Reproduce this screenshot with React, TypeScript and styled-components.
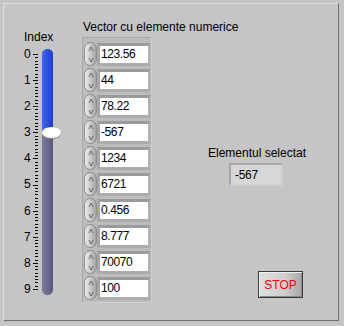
import React from "react";
import styled, { createGlobalStyle } from "styled-components";

const Global = createGlobalStyle`
  html, body { margin: 0; padding: 0; background: #c5c4c6; }
  body { font-family: "Liberation Sans", Arial, sans-serif; font-size: 12px; color: #000; }
`;

const Page = styled.div`
  width: 344px;
  height: 326px;
  padding: 3px;
  box-sizing: border-box;
  background: #c5c4c6;
`;

const Panel = styled.div`
  width: 336px;
  height: 318px;
  box-sizing: border-box;
  border-top: 1px solid #dedede;
  border-left: 1px solid #dedede;
  border-right: 1px solid #6e6e6e;
  border-bottom: 1px solid #6e6e6e;
  background: #c5c4c6;
  display: flex;
  align-items: flex-start;
  padding: 16px 0 0 20px;
`;

const Label = styled.div`
  font-size: 12px;
  line-height: 14px;
  white-space: nowrap;
`;

const SliderCol = styled.div`
  width: 58px;
  margin-top: 10px;
  display: flex;
  flex-direction: column;
`;

const SliderBody = styled.div`
  display: flex;
  align-items: flex-start;
  margin-top: -3px;
`;

const ScaleLabels = styled.div`
  display: flex;
  flex-direction: column;
  width: 8px;
`;

const ScaleNum = styled.div`
  height: 26.1px;
  line-height: 26px;
  font-size: 12px;
`;

const Ticks = styled.svg`
  flex: none;
`;

const Track = styled.div`
  position: relative;
  margin-top: 8px;
  margin-left: 3px;
  width: 11px;
  height: 246px;
  border-radius: 6px;
  background: linear-gradient(to right, #7c7c9e, #67678c 60%, #57577c);
`;

const Fill = styled.div`
  position: absolute;
  left: 0;
  top: 0;
  width: 11px;
  border-radius: 6px 6px 0 0;
  background: linear-gradient(to right, #4468f6, #2a4cec 55%, #1f3bcc);
`;

const Thumb = styled.div`
  position: absolute;
  left: 0;
  width: 19px;
  height: 11px;
  border-radius: 50%;
  background: radial-gradient(ellipse at 45% 40%, #ffffff 55%, #ececec 80%, #c4c4c4);
  box-shadow: 0 1px 0 #8a8a8a;
`;

const ArrayCol = styled.div`
  width: 70px;
  display: flex;
  flex-direction: column;
`;

const ArrayLabel = styled(Label)`
  margin-left: 1px;
`;

const ArrayBox = styled.div`
  margin-top: 3px;
  width: 70px;
  box-sizing: border-box;
  border: 1px solid #a9a8a9;
  border-right-color: #d0cfd0;
  border-bottom-color: #d0cfd0;
  padding: 3px 0 1px 0;
  background: #bcbbbd;
  display: flex;
  flex-direction: column;
`;

const ElementRow = styled.div`
  height: 26px;
  display: flex;
  align-items: center;
  padding-left: 1px;
`;

const IncDec = styled.div`
  width: 13px;
  height: 24px;
  box-sizing: border-box;
  border-radius: 7px;
  border: 1px solid #8e8e8e;
  background: linear-gradient(to right, #ececec, #cdcdcd 45%, #a2a2a2);
  display: flex;
  flex-direction: column;
  align-items: center;
  justify-content: space-around;
`;

const FieldFrame = styled.div`
  width: 54px;
  height: 23px;
  box-sizing: border-box;
  border: 3px solid #a7a6a8;
  border-top-color: #9b9a9c;
  border-right-color: #b2b1b3;
  border-bottom-color: #acabad;
  background: #fff;
  display: flex;
  align-items: center;
`;

const Field = styled.div`
  flex: 1;
  padding-left: 1px;
  font-size: 12px;
  letter-spacing: -0.4px;
  line-height: 17px;
  white-space: nowrap;
  overflow: hidden;
`;

const RightCol = styled.div`
  margin-left: 56px;
  margin-top: 126px;
  display: flex;
  flex-direction: column;
  align-items: flex-start;
`;

const Indicator = styled.div`
  margin-top: 3px;
  margin-left: 21px;
  width: 54px;
  height: 23px;
  box-sizing: border-box;
  border: 2px solid #a8a7a8;
  border-bottom-color: #cfcecf;
  border-right-color: #cfcecf;
  background: #d8d7d8;
  display: flex;
  align-items: center;
  padding-left: 4px;
  font-size: 12px;
  letter-spacing: -0.3px;
`;

const StopButton = styled.button`
  margin-top: 85px;
  margin-left: 50px;
  width: 45px;
  height: 27px;
  box-sizing: border-box;
  border: 1px solid #3a3a3a;
  padding: 0;
  background: linear-gradient(to right, #dedede, #cfcfcf 60%, #a6a6a6);
  box-shadow: inset 1px 1px 0 #f0f0f0, inset -1px -1px 0 #8a8a8a;
  color: #ff0000;
  font-family: "Liberation Sans", Arial, sans-serif;
  font-size: 12px;
  cursor: pointer;
`;

const values = ["123.56", "44", "78.22", "-567", "1234", "6721", "0.456", "8.777", "70070", "100"];

const Arrow = ({ up }: { up: boolean }) => (
  <svg width="6" height="6" viewBox="0 0 6 6">
    {up ? (
      <path d="M1 5 L3 1 L5 5" fill="none" stroke="#5e5e5e" strokeWidth="0.9" />
    ) : (
      <path d="M1 1 L3 5 L5 1" fill="none" stroke="#5e5e5e" strokeWidth="0.9" />
    )}
  </svg>
);

const TickMarks = () => {
  const lines: React.ReactNode[] = [];
  const pitch = 26.1;
  for (let i = 0; i < 10; i++) {
    const y = 13 + i * pitch;
    lines.push(<rect key={"M" + i} x={1} y={Math.round(y)} width={5} height={1} fill="#000" />);
    if (i < 9) {
      for (let j = 1; j < 8; j++) {
        const yy = y + (j * pitch) / 8;
        lines.push(<rect key={`m${i}-${j}`} x={3} y={Math.round(yy)} width={3} height={1} fill="#000" />);
      }
    }
  }
  return (
    <Ticks width="7" height="262" viewBox="0 0 7 262">
      {lines}
    </Ticks>
  );
};

export default function App() {
  const index = 3;
  const thumbCenter = 5 + index * 26.1;
  return (
    <>
      <Global />
      <Page>
        <Panel>
          <SliderCol>
            <Label>Index</Label>
            <SliderBody>
              <ScaleLabels>
                {Array.from({ length: 10 }, (_, i) => (
                  <ScaleNum key={i}>{i}</ScaleNum>
                ))}
              </ScaleLabels>
              <TickMarks />
              <Track>
                <Fill style={{ height: thumbCenter }} />
                <Thumb style={{ top: thumbCenter - 5.5 }} />
              </Track>
            </SliderBody>
          </SliderCol>
          <ArrayCol>
            <ArrayLabel>Vector cu elemente numerice</ArrayLabel>
            <ArrayBox>
              {values.map((v, i) => (
                <ElementRow key={i}>
                  <IncDec>
                    <Arrow up />
                    <Arrow up={false} />
                  </IncDec>
                  <FieldFrame>
                    <Field>{v}</Field>
                  </FieldFrame>
                </ElementRow>
              ))}
            </ArrayBox>
          </ArrayCol>
          <RightCol>
            <Label>Elementul selectat</Label>
            <Indicator>-567</Indicator>
            <StopButton>STOP</StopButton>
          </RightCol>
        </Panel>
      </Page>
    </>
  );
}
